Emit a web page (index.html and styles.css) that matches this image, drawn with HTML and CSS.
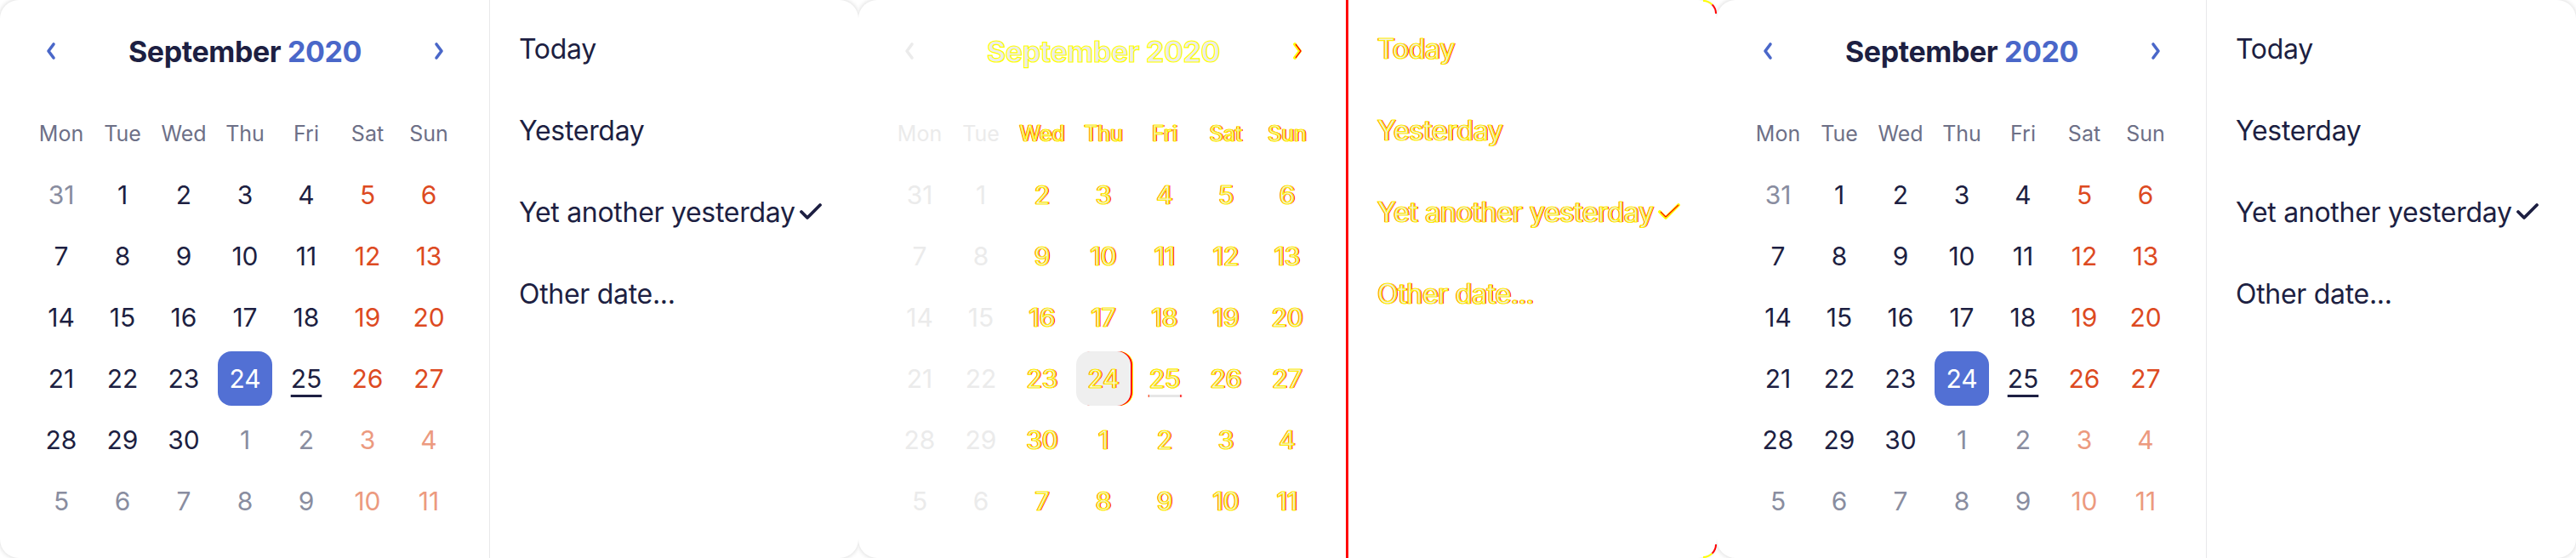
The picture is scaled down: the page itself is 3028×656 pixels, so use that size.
FILE: index.html
```html
<!DOCTYPE html>
<html lang="en">
<head>
<meta charset="utf-8">
<title>Date picker diff</title>
<link rel="stylesheet" href="styles.css">
</head>
<body>
<div class="strip">

  <!-- Expected -->
  <div class="shot">
    <div class="card">
      <div class="cal">
        <div class="head">
          <span class="nav"><svg width="14" height="22" viewBox="0 0 14 22"><path d="M10 3 L4 11 L10 19" fill="none" stroke="currentColor" stroke-width="3.6" stroke-linecap="round" stroke-linejoin="round"/></svg></span>
          <span class="title">September <span class="year">2020</span></span>
          <span class="nav"><svg width="14" height="22" viewBox="0 0 14 22"><path d="M4 3 L10 11 L4 19" fill="none" stroke="currentColor" stroke-width="3.6" stroke-linecap="round" stroke-linejoin="round"/></svg></span>
        </div>
        <div class="grid">
          <span class="wd">Mon</span><span class="wd">Tue</span><span class="wd">Wed</span><span class="wd">Thu</span><span class="wd">Fri</span><span class="wd">Sat</span><span class="wd">Sun</span>
          <span class="day o">31</span><span class="day">1</span><span class="day">2</span><span class="day">3</span><span class="day">4</span><span class="day we">5</span><span class="day we">6</span>
          <span class="day">7</span><span class="day">8</span><span class="day">9</span><span class="day">10</span><span class="day">11</span><span class="day we">12</span><span class="day we">13</span>
          <span class="day">14</span><span class="day">15</span><span class="day">16</span><span class="day">17</span><span class="day">18</span><span class="day we">19</span><span class="day we">20</span>
          <span class="day">21</span><span class="day">22</span><span class="day">23</span><span class="day sel"><span class="n">24</span></span><span class="day today"><span class="n">25</span></span><span class="day we">26</span><span class="day we">27</span>
          <span class="day">28</span><span class="day">29</span><span class="day">30</span><span class="day o">1</span><span class="day o">2</span><span class="day ow">3</span><span class="day ow">4</span>
          <span class="day o">5</span><span class="day o">6</span><span class="day o">7</span><span class="day o">8</span><span class="day o">9</span><span class="day ow">10</span><span class="day ow">11</span>
        </div>
      </div>
      <ul class="list">
        <li class="item">Today</li>
        <li class="item">Yesterday</li>
        <li class="item">Yet another yesterday <svg class="check" width="28" height="22" viewBox="0 0 28 22"><path d="M3 11 L10 18 L25 3" fill="none" stroke="currentColor" stroke-width="3.8" stroke-linecap="round" stroke-linejoin="round"/></svg></li>
        <li class="item">Other date...</li>
      </ul>
    </div>
  </div>

  <!-- Diff -->
  <div class="shot">
    <div class="card diff">
      <div class="cal">
        <div class="head">
          <span class="nav"><svg width="14" height="22" viewBox="0 0 14 22"><path d="M10 3 L4 11 L10 19" fill="none" stroke="currentColor" stroke-width="3.6" stroke-linecap="round" stroke-linejoin="round"/></svg></span>
          <span class="title x">September <span class="year">2020</span></span>
          <span class="nav x"><svg width="14" height="22" viewBox="0 0 14 22"><path d="M4 3 L10 11 L4 19" fill="none" stroke="#ff0" stroke-width="3.8" stroke-linecap="round" stroke-linejoin="round"/><path d="M5 3 L11 11 L5 19" fill="none" stroke="#f00" stroke-width="1.3" stroke-linejoin="round"/></svg></span>
        </div>
        <div class="grid">
          <span class="wd">Mon</span><span class="wd">Tue</span><span class="wd x">Wed</span><span class="wd x">Thu</span><span class="wd x">Fri</span><span class="wd x">Sat</span><span class="wd x">Sun</span>
          <span class="day">31</span><span class="day">1</span><span class="day x">2</span><span class="day x">3</span><span class="day x">4</span><span class="day x">5</span><span class="day x">6</span>
          <span class="day">7</span><span class="day">8</span><span class="day x">9</span><span class="day x">10</span><span class="day x">11</span><span class="day x">12</span><span class="day x">13</span>
          <span class="day">14</span><span class="day">15</span><span class="day x">16</span><span class="day x">17</span><span class="day x">18</span><span class="day x">19</span><span class="day x">20</span>
          <span class="day">21</span><span class="day">22</span><span class="day x">23</span><span class="day sel x"><span class="n">24</span></span><span class="day today x"><span class="n">25</span></span><span class="day x">26</span><span class="day x">27</span>
          <span class="day">28</span><span class="day">29</span><span class="day x">30</span><span class="day x">1</span><span class="day x">2</span><span class="day x">3</span><span class="day x">4</span>
          <span class="day">5</span><span class="day">6</span><span class="day x">7</span><span class="day x">8</span><span class="day x">9</span><span class="day x">10</span><span class="day x">11</span>
        </div>
      </div>
      <ul class="list">
        <li class="item x">Today</li>
        <li class="item x">Yesterday</li>
        <li class="item x">Yet another yesterday <svg class="check" width="28" height="22" viewBox="0 0 28 22"><path d="M3 11 L10 18 L25 3" fill="none" stroke="#ff0" stroke-width="3.8" stroke-linecap="round" stroke-linejoin="round"/><path d="M4 11 L10 17 L25 3" fill="none" stroke="#f00" stroke-width="1.1" stroke-linejoin="round"/></svg></li>
        <li class="item x">Other date...</li>
      </ul>
      <span class="corner tr"></span>
      <span class="corner br"></span>
    </div>
  </div>

  <!-- Actual -->
  <div class="shot">
    <div class="card">
      <div class="cal">
        <div class="head">
          <span class="nav"><svg width="14" height="22" viewBox="0 0 14 22"><path d="M10 3 L4 11 L10 19" fill="none" stroke="currentColor" stroke-width="3.6" stroke-linecap="round" stroke-linejoin="round"/></svg></span>
          <span class="title">September <span class="year">2020</span></span>
          <span class="nav"><svg width="14" height="22" viewBox="0 0 14 22"><path d="M4 3 L10 11 L4 19" fill="none" stroke="currentColor" stroke-width="3.6" stroke-linecap="round" stroke-linejoin="round"/></svg></span>
        </div>
        <div class="grid">
          <span class="wd">Mon</span><span class="wd">Tue</span><span class="wd">Wed</span><span class="wd">Thu</span><span class="wd">Fri</span><span class="wd">Sat</span><span class="wd">Sun</span>
          <span class="day o">31</span><span class="day">1</span><span class="day">2</span><span class="day">3</span><span class="day">4</span><span class="day we">5</span><span class="day we">6</span>
          <span class="day">7</span><span class="day">8</span><span class="day">9</span><span class="day">10</span><span class="day">11</span><span class="day we">12</span><span class="day we">13</span>
          <span class="day">14</span><span class="day">15</span><span class="day">16</span><span class="day">17</span><span class="day">18</span><span class="day we">19</span><span class="day we">20</span>
          <span class="day">21</span><span class="day">22</span><span class="day">23</span><span class="day sel"><span class="n">24</span></span><span class="day today"><span class="n">25</span></span><span class="day we">26</span><span class="day we">27</span>
          <span class="day">28</span><span class="day">29</span><span class="day">30</span><span class="day o">1</span><span class="day o">2</span><span class="day ow">3</span><span class="day ow">4</span>
          <span class="day o">5</span><span class="day o">6</span><span class="day o">7</span><span class="day o">8</span><span class="day o">9</span><span class="day ow">10</span><span class="day ow">11</span>
        </div>
      </div>
      <ul class="list">
        <li class="item">Today</li>
        <li class="item">Yesterday</li>
        <li class="item">Yet another yesterday <svg class="check" width="28" height="22" viewBox="0 0 28 22"><path d="M3 11 L10 18 L25 3" fill="none" stroke="currentColor" stroke-width="3.8" stroke-linecap="round" stroke-linejoin="round"/></svg></li>
        <li class="item">Other date...</li>
      </ul>
    </div>
  </div>

</div>
</body>
</html>
```

FILE: styles.css
```css
* {
  box-sizing: border-box;
  margin: 0;
  padding: 0;
}

body {
  margin: 0;
  background: #ffffff;
  font-family: Inter, "Noto Sans", "DejaVu Sans", sans-serif;
  color: #1d1f42;
}

.strip {
  display: grid;
  grid-template-columns: 1009px 1009px 1010px;
  height: 656px;
}

.shot {
  overflow: hidden;
  background: #ffffff;
}

.card {
  position: relative;
  width: 100%;
  height: 100%;
  display: flex;
  background: #ffffff;
  border-radius: 22px;
  box-shadow: 0 0 5px 1px rgba(0, 0, 0, 0.13);
}

/* calendar column */
.cal {
  width: 576px;
  flex: none;
  padding: 36px 35px 0 36px;
  border-right: 1px solid #e8e8ea;
}

.head {
  display: flex;
  align-items: center;
  height: 48px;
  margin-bottom: 37px;
}

.nav {
  width: 48px;
  height: 48px;
  display: flex;
  align-items: center;
  justify-content: center;
  color: #4a67c9;
}

.title {
  flex: 1;
  text-align: center;
  font-size: 34px;
  font-weight: 700;
  letter-spacing: -0.4px;
  color: #1d1f42;
}

.year {
  color: #4a67c9;
}

.grid {
  display: grid;
  grid-template-columns: repeat(7, 72px);
  grid-auto-rows: 72px;
}

.wd,
.day {
  display: flex;
  align-items: center;
  justify-content: center;
}

.wd {
  font-size: 25px;
  color: #6d7087;
}

.day {
  font-size: 30px;
  color: #1d1f42;
}

.day.we {
  color: #dd4a22;
}

.day.o {
  color: #898da0;
}

.day.ow {
  color: #ec9a7f;
}

.sel .n {
  width: 64px;
  height: 64px;
  border-radius: 16px;
  background: #5270d4;
  color: #ffffff;
  display: flex;
  align-items: center;
  justify-content: center;
}

.today .n {
  text-decoration: underline;
  text-decoration-thickness: 3px;
  text-underline-offset: 8px;
}

/* quick list */
.list {
  flex: 1;
  list-style: none;
  padding: 9px 0 0 34px;
}

.item {
  height: 96px;
  display: flex;
  align-items: center;
  gap: 4px;
  font-size: 32px;
  letter-spacing: -0.3px;
  color: #1d1f42;
}

.check {
  color: #1d1f42;
}

/* diff panel */
.diff .nav,
.diff .title,
.diff .year,
.diff .wd,
.diff .day,
.diff .item {
  color: #ebebeb;
}

.diff .cal {
  border-right: 3px solid #ff0000;
  padding-right: 33px;
}

.diff .x,
.diff .x .year {
  color: #eeeeee;
  -webkit-text-stroke: 1.2px #ffee00;
  text-shadow: 1.5px 0 0 #ff0000, -1px 0 0 #ff3000;
}

.diff .title.x,
.diff .title.x .year {
  color: #ebebeb;
  -webkit-text-stroke: 1.2px #ffff00;
  text-shadow: none;
}

.diff .sel .n {
  background: #efefef;
  color: #f4f4f4;
  box-shadow: 2px 0 0 #ff0000, 3px 0 0 #ffff00;
}

.diff .today .n {
  text-decoration-color: #e6e6e6;
}

.corner {
  position: absolute;
  right: 0;
  width: 16px;
  height: 16px;
  border-right: 2px solid #ff0000;
}

.corner.tr {
  top: 0;
  border-top: 2px solid #ffff00;
  border-top-right-radius: 16px;
}

.corner.br {
  bottom: 0;
  border-bottom: 2px solid #ffff00;
  border-bottom-right-radius: 16px;
}
```
